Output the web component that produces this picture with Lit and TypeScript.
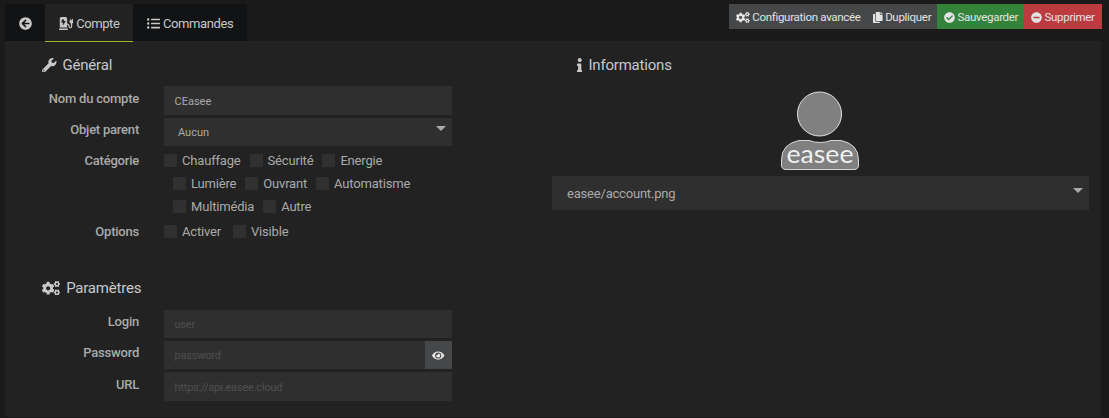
import { LitElement, html, css, svg } from "lit";
import { customElement, property } from "lit/decorators.js";

const ICONS: Record<string, { w: number; d: string }> = {
  back: { w: 512, d: "M256 504C119 504 8 393 8 256S119 8 256 8s248 111 248 248-111 248-248 248zm28.9-143.6L209.4 288H392c13.3 0 24-10.7 24-24v-16c0-13.3-10.7-24-24-24H209.4l75.5-72.4c9.7-9.3 9.9-24.8.4-34.3l-11-10.9c-9.4-9.4-24.6-9.4-33.9 0L107.7 239c-9.4 9.4-9.4 24.6 0 33.9l132.7 132.7c9.4 9.4 24.6 9.4 33.9 0l11-10.9c9.5-9.5 9.3-25-.4-34.3z" },
  station: { w: 576, d: "M336 448H16c-8.84 0-16 7.16-16 16v32c0 8.84 7.16 16 16 16h320c8.84 0 16-7.16 16-16v-32c0-8.84-7.16-16-16-16zm208-320V80c0-8.84-7.16-16-16-16s-16 7.16-16 16v48h-32V80c0-8.84-7.16-16-16-16s-16 7.16-16 16v48h-16c-8.84 0-16 7.16-16 16v32c0 35.76 23.62 65.69 56 75.93v118.49c0 13.95-9.5 26.92-23.26 29.19C431.22 402.5 416 388.99 416 372v-28c0-48.6-39.4-88-88-88h-8V64c0-35.35-28.65-64-64-64H96C60.65 0 32 28.65 32 64v352h288V304h8c22.09 0 40 17.91 40 40v24.61c0 39.67 28.92 75.16 68.41 79.01C481.71 452.05 520 416.41 520 372V251.93c32.38-10.24 56-40.17 56-75.93v-32c0-8.84-7.16-16-16-16h-16zm-283.91 47.76l-93.7 139c-2.2 3.33-6.21 5.24-10.39 5.24-7.67 0-13.47-6.28-11.67-12.92L167.35 224H108c-7.25 0-12.85-5.59-11.89-11.89l16-107C112.9 99.9 117.98 96 124 96h68c7.88 0 13.62 6.54 11.6 13.21L192 160h57.7c9.24 0 15.01 8.78 10.39 15.76z" },
  list: { w: 512, d: "M48 48a48 48 0 1 0 48 48 48 48 0 0 0-48-48zm0 160a48 48 0 1 0 48 48 48 48 0 0 0-48-48zm0 160a48 48 0 1 0 48 48 48 48 0 0 0-48-48zm448 16H176a16 16 0 0 0-16 16v32a16 16 0 0 0 16 16h320a16 16 0 0 0 16-16v-32a16 16 0 0 0-16-16zm0-320H176a16 16 0 0 0-16 16v32a16 16 0 0 0 16 16h320a16 16 0 0 0 16-16V80a16 16 0 0 0-16-16zm0 160H176a16 16 0 0 0-16 16v32a16 16 0 0 0 16 16h320a16 16 0 0 0 16-16v-32a16 16 0 0 0-16-16z" },
  wrench: { w: 512, d: "M507.73 109.1c-2.24-9.03-13.54-12.09-20.12-5.51l-74.36 74.36-67.88-11.31-11.31-67.88 74.36-74.36c6.62-6.62 3.43-17.9-5.66-20.16-47.38-11.74-99.55.91-136.58 37.93-39.64 39.64-50.55 97.1-34.05 147.2L18.74 402.76c-24.99 24.99-24.99 65.51 0 90.5 24.99 24.99 65.51 24.99 90.5 0l213.21-213.21c50.12 16.71 107.47 5.68 147.37-34.22 37.07-37.07 49.7-89.32 37.91-136.73zM64 472c-13.25 0-24-10.75-24-24 0-13.26 10.75-24 24-24s24 10.74 24 24c0 13.25-10.75 24-24 24z" },
  cogs: { w: 640, d: "M512.1 191l-8.2 14.3c-3 5.3-9.4 7.5-15.1 5.4-11.8-4.4-22.6-10.7-32.1-18.6-4.6-3.8-5.8-10.5-2.8-15.7l8.2-14.3c-6.9-8-12.3-17.3-15.9-27.4h-16.5c-6 0-11.2-4.3-12.2-10.3-2-12-2.1-24.6 0-37.1 1-6 6.2-10.4 12.2-10.4h16.5c3.6-10.1 9-19.4 15.9-27.4l-8.2-14.3c-3-5.2-1.9-11.9 2.8-15.7 9.5-7.9 20.4-14.2 32.1-18.6 5.7-2.1 12.1.1 15.1 5.4l8.2 14.3c10.5-1.9 21.2-1.9 31.7 0L552 6.3c3-5.3 9.4-7.5 15.1-5.4 11.8 4.4 22.6 10.7 32.1 18.6 4.6 3.8 5.8 10.5 2.8 15.7l-8.2 14.3c6.9 8 12.3 17.3 15.9 27.4h16.5c6 0 11.2 4.3 12.2 10.3 2 12 2.1 24.6 0 37.1-1 6-6.2 10.4-12.2 10.4h-16.5c-3.6 10.1-9 19.4-15.9 27.4l8.2 14.3c3 5.2 1.9 11.9-2.8 15.7-9.5 7.9-20.4 14.2-32.1 18.6-5.7 2.1-12.1-.1-15.1-5.4l-8.2-14.3c-10.4 1.9-21.2 1.9-31.7 0zm-10.5-58.8c38.5 29.6 82.4-14.3 52.8-52.8-38.5-29.7-82.4 14.3-52.8 52.8zM386.3 286.1l33.7 16.8c10.1 5.8 14.5 18.1 10.5 29.1-8.9 24.2-26.4 46.4-42.6 65.8-7.4 8.9-20.2 11.1-30.3 5.3l-29.1-16.8c-16 13.7-34.6 24.6-54.9 31.7v33.6c0 11.6-8.3 21.6-19.7 23.6-24.6 4.2-50.4 4.4-75.9 0-11.5-2-20-11.9-20-23.6V418c-20.3-7.2-38.9-18-54.9-31.7L74 403c-10 5.8-22.9 3.6-30.3-5.3-16.2-19.4-33.3-41.6-42.2-65.7-4-10.9.4-23.2 10.5-29.1l33.3-16.8c-3.9-20.9-3.9-42.4 0-63.4L12 205.8c-10.1-5.8-14.6-18.1-10.5-29 8.9-24.2 26-46.4 42.2-65.8 7.4-8.9 20.2-11.1 30.3-5.3l29.1 16.8c16-13.7 34.6-24.6 54.9-31.7V57.1c0-11.5 8.2-21.5 19.6-23.5 24.6-4.2 50.5-4.4 76-.1 11.5 2 20 11.9 20 23.6v33.6c20.3 7.2 38.9 18 54.9 31.7l29.1-16.8c10-5.8 22.9-3.6 30.3 5.3 16.2 19.4 33.2 41.6 42.1 65.8 4 10.9.1 23.2-10 29.1l-33.7 16.8c3.9 21 3.9 42.5 0 63.5zm-117.6 21.1c59.2-77-28.7-164.9-105.7-105.7-59.2 77 28.7 164.9 105.7 105.7zm243.4 182.7l-8.2 14.3c-3 5.3-9.4 7.5-15.1 5.4-11.8-4.4-22.6-10.7-32.1-18.6-4.6-3.8-5.8-10.5-2.8-15.7l8.2-14.3c-6.9-8-12.3-17.3-15.9-27.4h-16.5c-6 0-11.2-4.3-12.2-10.3-2-12-2.1-24.6 0-37.1 1-6 6.2-10.4 12.2-10.4h16.5c3.6-10.1 9-19.4 15.9-27.4l-8.2-14.3c-3-5.2-1.9-11.9 2.8-15.7 9.5-7.9 20.4-14.2 32.1-18.6 5.7-2.1 12.1.1 15.1 5.4l8.2 14.3c10.5-1.9 21.2-1.9 31.7 0l8.2-14.3c3-5.3 9.4-7.5 15.1-5.4 11.8 4.4 22.6 10.7 32.1 18.6 4.6 3.8 5.8 10.5 2.8 15.7l-8.2 14.3c6.9 8 12.3 17.3 15.9 27.4h16.5c6 0 11.2 4.3 12.2 10.3 2 12 2.1 24.6 0 37.1-1 6-6.2 10.4-12.2 10.4h-16.5c-3.6 10.1-9 19.4-15.9 27.4l8.2 14.3c3 5.2 1.9 11.9-2.8 15.7-9.5 7.9-20.4 14.2-32.1 18.6-5.7 2.1-12.1-.1-15.1-5.4l-8.2-14.3c-10.4 1.9-21.2 1.9-31.7 0zM501.6 431c38.5 29.6 82.4-14.3 52.8-52.8-38.5-29.6-82.4 14.3-52.8 52.8z" },
  copy: { w: 448, d: "M320 448v40c0 13.255-10.745 24-24 24H24c-13.255 0-24-10.745-24-24V120c0-13.255 10.745-24 24-24h72v296c0 30.879 25.121 56 56 56h168zm0-344V0H152c-13.255 0-24 10.745-24 24v368c0 13.255 10.745 24 24 24h272c13.255 0 24-10.745 24-24V128H344c-13.2 0-24-10.8-24-24zm120.971-31.029L375.029 7.029A24 24 0 0 0 358.059 0H352v96h96v-6.059a24 24 0 0 0-7.029-16.97z" },
  check: { w: 512, d: "M504 256c0 136.967-111.033 248-248 248S8 392.967 8 256 119.033 8 256 8s248 111.033 248 248zM227.314 387.314l184-184c6.248-6.248 6.248-16.379 0-22.627l-22.627-22.627c-6.248-6.249-16.379-6.249-22.628 0L216 308.118l-70.059-70.059c-6.248-6.248-16.379-6.248-22.628 0l-22.627 22.627c-6.248 6.248-6.248 16.379 0 22.627l104 104c6.249 6.249 16.379 6.249 22.628.001z" },
  minus: { w: 512, d: "M256 8C119 8 8 119 8 256s111 248 248 248 248-111 248-248S393 8 256 8zM124 296c-6.6 0-12-5.4-12-12v-56c0-6.6 5.4-12 12-12h264c6.6 0 12 5.4 12 12v56c0 6.6-5.4 12-12 12H124z" },
  info: { w: 192, d: "M20 424.229h20V279.771H20c-11.046 0-20-8.954-20-20V212c0-11.046 8.954-20 20-20h112c11.046 0 20 8.954 20 20v212.229h20c11.046 0 20 8.954 20 20V492c0 11.046-8.954 20-20 20H20c-11.046 0-20-8.954-20-20v-47.771c0-11.046 8.954-20 20-20zM96 0C56.235 0 24 32.235 24 72s32.235 72 72 72 72-32.235 72-72S135.764 0 96 0z" },
  eye: { w: 576, d: "M572.52 241.4C518.29 135.59 410.93 64 288 64S57.68 135.64 3.48 241.41a32.35 32.35 0 0 0 0 29.19C57.71 376.41 165.07 448 288 448s230.32-71.64 284.52-177.41a32.35 32.35 0 0 0 0-29.19zM288 400a144 144 0 1 1 144-144 143.93 143.93 0 0 1-144 144zm0-240a95.31 95.31 0 0 0-25.31 3.79 47.85 47.85 0 0 1-66.9 66.9A95.78 95.78 0 1 0 288 160z" },
};

@customElement("fa-icon")
class FaIcon extends LitElement {
  @property() name = "";
  static styles = css`
    :host { display: inline-flex; flex: none; height: 1em; }
    svg { height: 1em; display: block; fill: currentColor; }
  `;
  render() {
    const i = ICONS[this.name];
    return html`<svg viewBox="0 0 ${i.w} 512">${svg`<path d=${i.d}></path>`}</svg>`;
  }
}

@customElement("app-root")
class AppRoot extends LitElement {
  static styles = css`
    :host {
      display: block; box-sizing: border-box; height: 418px; padding: 4px 8px 1px 5px;
      background: #1a1a1a; color: #aaaaaa; overflow: hidden;
      font-family: Roboto, sans-serif; font-size: 13px; line-height: 18px;
    }
    * { box-sizing: border-box; }
    .top { display: flex; justify-content: space-between; align-items: flex-start; height: 37px; margin-right: -1px; }
    .tabs { display: flex; height: 38px; }
    .tab { display: flex; align-items: center; height: 37px; padding-top: 2px; gap: 3px; white-space: nowrap; letter-spacing: -0.4px; background: #121315; color: #c8c8c8; }
    .tab fa-icon { font-size: 13px; }
    .tab.back { width: 40px; padding-left: 14px; }
    .tab.active { width: 88px; height: 38px; padding-left: 13.5px; background: #222222; border-bottom: 1px solid #94b826; }
    .tab.cmd { width: 114px; padding-left: 14px; }
    .buttons { display: flex; height: 25px; font-size: 11.5px; letter-spacing: -0.3px; color: #e3e3e3; }
    .btn { display: flex; align-items: center; gap: 2.5px; padding: 1px 0 0 7px; white-space: nowrap; background: #464749; }
    .btn fa-icon { font-size: 11px; }
    .btn.conf { width: 137px; }
    .btn.dup { width: 71px; }
    .btn.save { width: 87px; background: #33833b; }
    .btn.del { width: 78px; background: #bc3b3f; }
    .panel { display: flex; height: 376px; background: #222222; }
    .left { width: 547px; padding-top: 14px; }
    .right { width: 537px; padding-top: 14px; }
    .legend { display: flex; align-items: center; height: 20px; padding-left: 37px; gap: 6px; font-size: 15px; letter-spacing: -0.2px; color: #c8c8c8; }
    .right .legend { padding-left: 25px; }
    .legend fa-icon { font-size: 14.5px; }
    .form { display: grid; grid-template-columns: 134px 288px; column-gap: 25px; }
    .general { padding-top: 11px; grid-template-rows: 32px 32px 71px 24px; height: 203px; }
    .params { padding-top: 12px; grid-template-rows: 31px 31px 31px; }
    .label { font-weight: 500; text-align: right; padding-top: 3px; letter-spacing: -0.22px; }
    .label.high { padding-top: 2px; }
    .label.low { padding-top: 4px; }
    .input { display: flex; align-items: center; height: 28px; background: #2f2f2f; font-size: 11px; padding: 2px 0 0 10.5px; }
    .input.tall { height: 29px; }
    .input.select { padding: 1px 6px 0 14px; justify-content: space-between; }
    .muted { color: #505050; letter-spacing: -0.2px; }
    .arrow { width: 0; height: 0; border: 5.5px solid transparent; border-top: 5px solid #aaaaaa; border-bottom: 0; margin-bottom: 8px; }
    .pick .arrow { margin-bottom: 6px; }
    .input.pass { padding-right: 0; padding-top: 0; justify-content: space-between; }
    .input.pass .hint { padding-top: 2px; }
    .eye { display: flex; align-items: center; justify-content: center; width: 27px; height: 28px; background: #464749; color: #e8e8e8; }
    .eye fa-icon { font-size: 11px; }
    .checks { display: flex; flex-direction: column; gap: 5px; padding-top: 2px; }
    .line { display: flex; gap: 9px; height: 18px; }
    .line.wrap { padding-left: 9px; }
    .line.opts { gap: 12px; }
    .check { display: flex; align-items: center; gap: 5px; white-space: nowrap; letter-spacing: -0.18px; }
    .box { width: 13px; height: 13px; margin-bottom: 1px; background: #303030; }
    .portrait { display: block; width: 80px; height: 80px; margin: 15px auto 6px 228px; }
    .pick { display: flex; align-items: center; justify-content: space-between; height: 34px; padding: 1px 6px 0 15px; background: #2f2f2f; letter-spacing: -0.2px; }
  `;

  private check(label: string) {
    return html`<label class="check"><span class="box"></span><span>${label}</span></label>`;
  }

  render() {
    return html`
      <header class="top">
        <nav class="tabs">
          <a class="tab back"><fa-icon name="back"></fa-icon></a>
          <a class="tab active"><fa-icon name="station"></fa-icon><span>Compte</span></a>
          <a class="tab cmd"><fa-icon name="list"></fa-icon><span>Commandes</span></a>
        </nav>
        <div class="buttons">
          <a class="btn conf"><fa-icon name="cogs"></fa-icon><span>Configuration avancée</span></a>
          <a class="btn dup"><fa-icon name="copy"></fa-icon><span>Dupliquer</span></a>
          <a class="btn save"><fa-icon name="check"></fa-icon><span>Sauvegarder</span></a>
          <a class="btn del"><fa-icon name="minus"></fa-icon><span>Supprimer</span></a>
        </div>
      </header>
      <main class="panel">
        <section class="left">
          <div class="legend"><fa-icon name="wrench"></fa-icon><span>Général</span></div>
          <div class="form general">
            <div class="label low">Nom du compte</div>
            <div class="input tall">CEasee</div>
            <div class="label">Objet parent</div>
            <div class="input select"><span>Aucun</span><i class="arrow"></i></div>
            <div class="label high">Catégorie</div>
            <div class="checks">
              <div class="line">${["Chauffage", "Sécurité", "Energie"].map((t) => this.check(t))}</div>
              <div class="line wrap">${["Lumière", "Ouvrant", "Automatisme"].map((t) => this.check(t))}</div>
              <div class="line wrap">${["Multimédia", "Autre"].map((t) => this.check(t))}</div>
            </div>
            <div class="label high">Options</div>
            <div class="checks"><div class="line opts">${["Activer", "Visible"].map((t) => this.check(t))}</div></div>
          </div>
          <div class="legend"><fa-icon name="cogs"></fa-icon><span>Paramètres</span></div>
          <div class="form params">
            <div class="label">Login</div>
            <div class="input muted">user</div>
            <div class="label">Password</div>
            <div class="input pass muted"><span class="hint">password</span><span class="eye"><fa-icon name="eye"></fa-icon></span></div>
            <div class="label low">URL</div>
            <div class="input tall muted">https://api.easee.cloud</div>
          </div>
        </section>
        <section class="right">
          <div class="legend"><fa-icon name="info"></fa-icon><span>Informations</span></div>
          <svg class="portrait" viewBox="0 0 80 80">
            <circle cx="39.500" cy="24" r="22" fill="#808080" stroke="#e4e4e4" stroke-width="1"></circle>
            <path d="M19 50.5H29Q40 54.5 51 50.5H61Q78.500 54 78.500 70V75Q78.500 79.500 74 79.500H6Q1.500 79.500 1.500 75V70Q1.500 54 19 50.500Z" fill="#808080" stroke="#d8d8d8" stroke-width="1"></path>
            <text x="6.500" y="73" textLength="67" lengthAdjust="spacingAndGlyphs" font-family="Lato, sans-serif" font-weight="400" font-size="25" fill="#f0f0f0">easee</text>
          </svg>
          <div class="pick"><span>easee/account.png</span><i class="arrow"></i></div>
        </section>
      </main>
    `;
  }
}
